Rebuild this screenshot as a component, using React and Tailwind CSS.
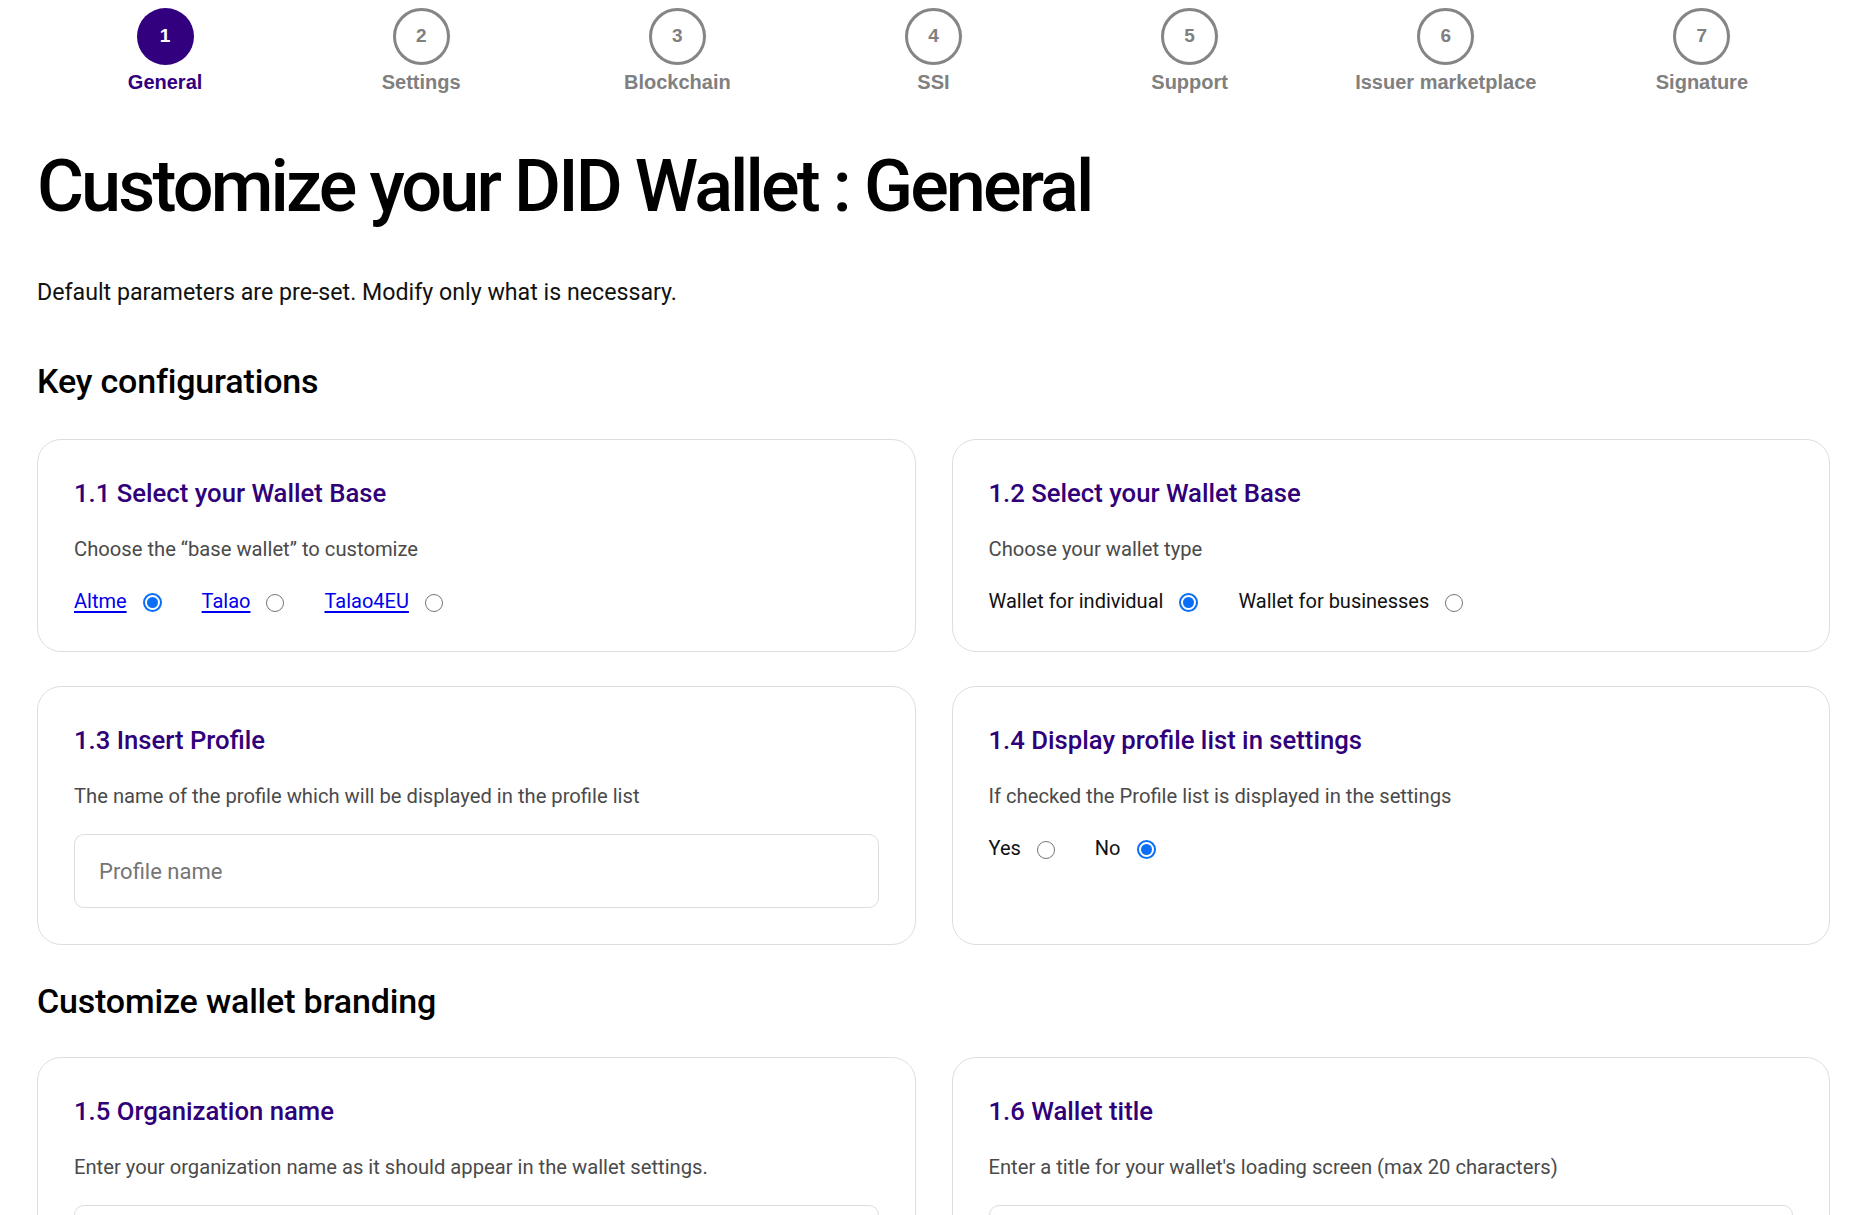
import React from "react";

const steps = [
	"General",
	"Settings",
	"Blockchain",
	"SSI",
	"Support",
	"Issuer marketplace",
	"Signature",
];

function Radio({ checked }) {
	if (checked) {
		return (
			<span className="mt-[3px] flex h-[19px] w-[19px] shrink-0 items-center justify-center rounded-full border-2 border-[#0b6ef7] bg-white">
				<span className="h-[11px] w-[11px] rounded-full bg-[#0b6ef7]" />
			</span>
		);
	}
	return (
		<span className="mt-[3px] h-[18px] w-[18px] shrink-0 rounded-full border-[1.5px] border-[#767676] bg-white" />
	);
}

function Option({ label, checked, link }) {
	return (
		<div className="flex items-center gap-4">
			{link ? (
				<a
					href="#"
					className="text-[#0000ee] underline underline-offset-[3px]"
				>
					{label}
				</a>
			) : (
				<span className="text-[#111]">{label}</span>
			)}
			<Radio checked={checked} />
		</div>
	);
}

function Card({ title, desc, children }) {
	return (
		<div className="flex flex-col gap-6 rounded-[24px] border border-[#dedede] bg-white p-9">
			<h3 className="text-[25.7px] font-medium leading-[35px] text-[#30007a]">
				{title}
			</h3>
			<p className="text-[20.2px] leading-[28px] text-[#4a4a4a]">{desc}</p>
			{children}
		</div>
	);
}

function TextInput({ placeholder }) {
	return (
		<input
			type="text"
			placeholder={placeholder}
			className="h-[74px] w-full rounded-[10px] border border-[#dcdcdc] px-6 text-[22px] text-[#222] outline-none placeholder:text-[#757575]"
		/>
	);
}

export default function App() {
	return (
		<div className="h-screen overflow-hidden bg-white font-['Roboto',sans-serif] text-black">
			<div className="pl-[37px] pr-[42px] pt-[8px]">
				{/* stepper */}
				<div className="grid grid-cols-7 font-['Liberation_Sans',Arial,sans-serif] font-bold">
					{steps.map((step, i) => (
						<div key={step} className="flex flex-col items-center">
							{i === 0 ? (
								<div className="flex h-[57px] w-[57px] items-center justify-center rounded-full bg-[#32007f] text-[19px] text-white">
									{i + 1}
								</div>
							) : (
								<div className="flex h-[57px] w-[57px] items-center justify-center rounded-full border-[3px] border-[#858585] text-[19px] text-[#808080]">
									{i + 1}
								</div>
							)}
							<div
								className={
									i === 0
										? "mt-[6px] text-[20px] leading-[23px] text-[#32007f]"
										: "mt-[6px] text-[20px] leading-[23px] text-[#808080]"
								}
							>
								{step}
							</div>
						</div>
					))}
				</div>

				<h1 className="mt-[50px] text-[72px] font-medium leading-[86px] tracking-[-0.04em]">
					Customize your DID Wallet : General
				</h1>

				<p className="mt-[46px] text-[23.2px] leading-[32px] text-[#111]">
					Default parameters are pre-set. Modify only what is necessary.
				</p>

				<h2 className="mt-[53px] text-[34px] font-medium leading-[40px] tracking-[-0.005em]">
					Key configurations
				</h2>

				<div className="mt-[38px] grid grid-cols-2 gap-x-9 gap-y-[34px]">
					<Card
						title="1.1 Select your Wallet Base"
						desc="Choose the “base wallet” to customize"
					>
						<div className="flex items-center gap-10 text-[20px] leading-[28px]">
							<Option label="Altme" checked link />
							<Option label="Talao" link />
							<Option label="Talao4EU" link />
						</div>
					</Card>
					<Card
						title="1.2 Select your Wallet Base"
						desc="Choose your wallet type"
					>
						<div className="flex items-center gap-10 text-[20px] leading-[28px]">
							<Option label="Wallet for individual" checked />
							<Option label="Wallet for businesses" />
						</div>
					</Card>
					<Card
						title="1.3 Insert Profile"
						desc="The name of the profile which will be displayed in the profile list"
					>
						<TextInput placeholder="Profile name" />
					</Card>
					<Card
						title="1.4 Display profile list in settings"
						desc="If checked the Profile list is displayed in the settings"
					>
						<div className="flex items-center gap-10 text-[20px] leading-[28px]">
							<Option label="Yes" />
							<Option label="No" checked />
						</div>
					</Card>
				</div>

				<h2 className="mt-[36px] text-[34px] font-medium leading-[40px] tracking-[-0.005em]">
					Customize wallet branding
				</h2>

				<div className="mt-[36px] grid grid-cols-2 gap-9">
					<Card
						title="1.5 Organization name"
						desc="Enter your organization name as it should appear in the wallet settings."
					>
						<TextInput placeholder="Organization name" />
					</Card>
					<Card
						title="1.6 Wallet title"
						desc="Enter a title for your wallet's loading screen (max 20 characters)"
					>
						<TextInput placeholder="Wallet title" />
					</Card>
				</div>
			</div>
		</div>
	);
}
